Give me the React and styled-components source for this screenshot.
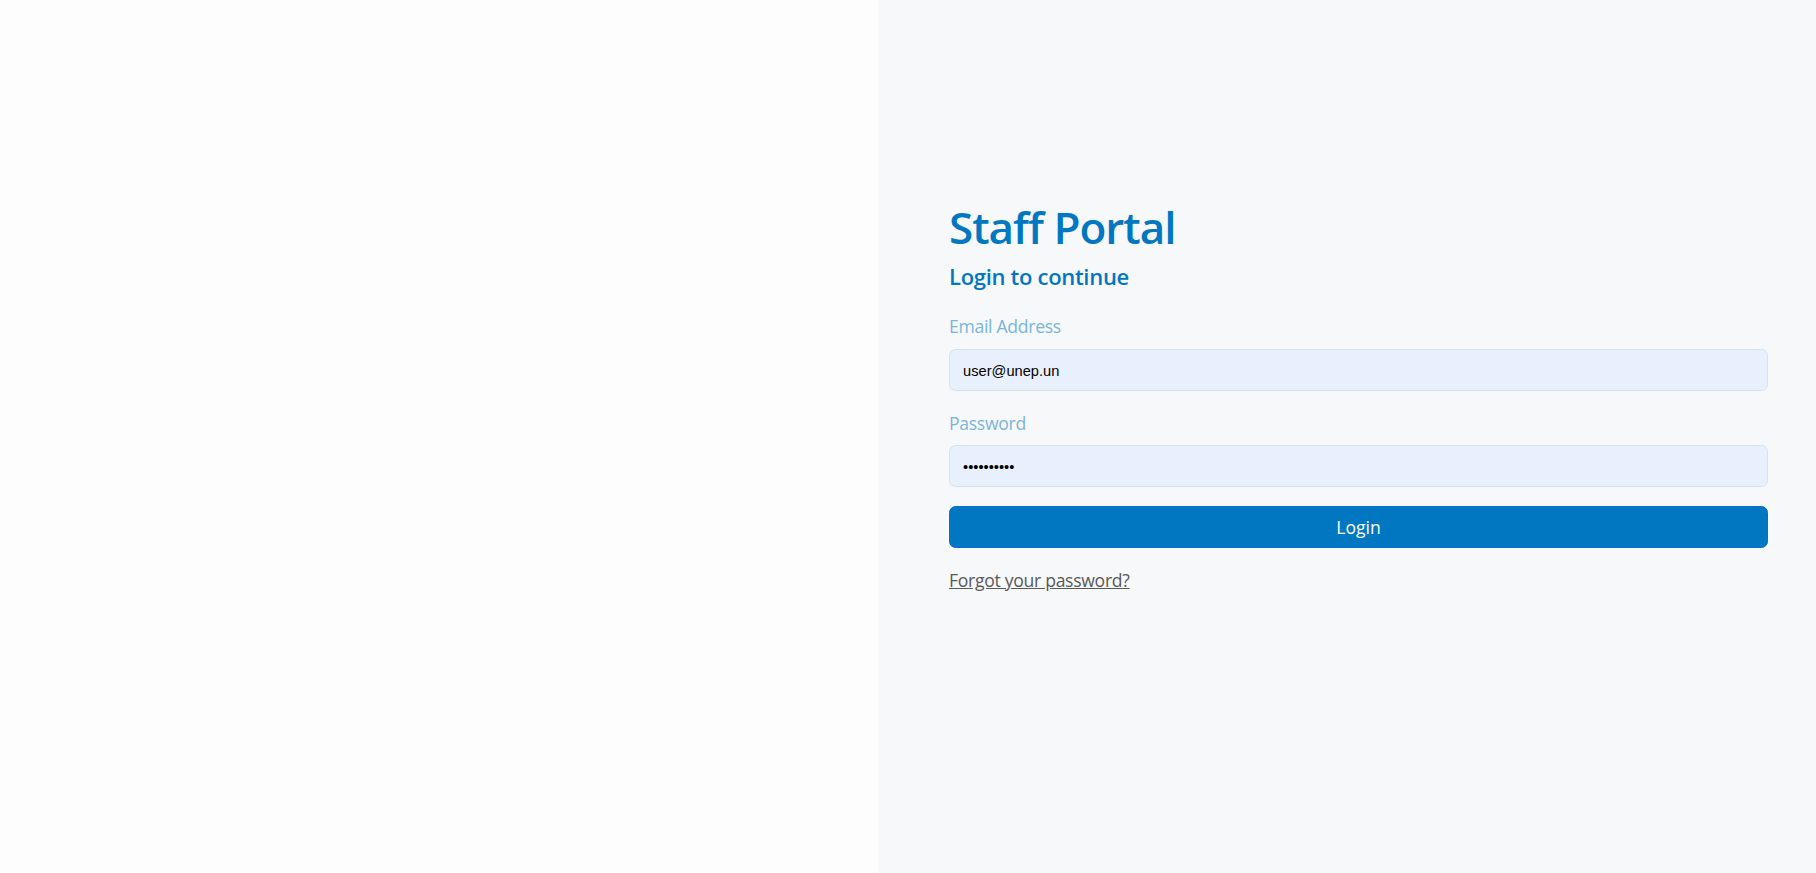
import React from "react";
import styled, { createGlobalStyle } from "styled-components";

const Global = createGlobalStyle`
  html, body { margin: 0; padding: 0; }
  body { font-family: "Open Sans", "Noto Sans", sans-serif; }
  * { box-sizing: border-box; }
`;

const Page = styled.div`
  display: grid;
  grid-template-columns: 878px 1fr;
  min-height: 873px;
`;

const Blank = styled.div`
  background: #fdfdfd;
`;

const Side = styled.div`
  background: #f7f8fa;
  padding: 201px 48px 0 71px;
`;

const Title = styled.h1`
  margin: 0 0 9px;
  font-size: 44px;
  line-height: 1.2;
  font-weight: 600;
  letter-spacing: -1px;
  color: #0077c0;
`;

const Subtitle = styled.h5`
  margin: 0 0 24px;
  font-size: 22px;
  line-height: 1.2;
  font-weight: 600;
  letter-spacing: -0.3px;
  color: #0077c0;
`;

const Form = styled.form`
  display: flex;
  flex-direction: column;
`;

const Field = styled.div`
  display: flex;
  flex-direction: column;
  margin-bottom: 19px;
`;

const Label = styled.label`
  font-size: 17.6px;
  line-height: 1.5;
  letter-spacing: -0.3px;
  color: #7ab5dc;
  margin-bottom: 9px;
`;

const Input = styled.input`
  height: 42px;
  padding: 2px 13px 0;
  border: 1px solid #dbe0e8;
  border-radius: 6.6px;
  background: #e8f0fe;
  font-family: "Liberation Sans", Arial, sans-serif;
  font-size: 14.67px;
  color: #000;
  outline: none;
`;

const Button = styled.button`
  height: 42px;
  border: 1px solid #0b6cd8;
  border-radius: 6.6px;
  background: #0077c0;
  color: #fff;
  font-family: inherit;
  font-size: 17.6px;
  cursor: pointer;
`;

const Forgot = styled.a`
  margin-top: 19px;
  font-size: 17.6px;
  line-height: 1.5;
  letter-spacing: -0.3px;
  color: #595959;
  text-decoration: underline;
  align-self: flex-start;
`;

export default function App() {
  return (
    <>
      <Global />
      <Page>
        <Blank />
        <Side>
          <Title>Staff Portal</Title>
          <Subtitle>Login to continue</Subtitle>
          <Form onSubmit={(e) => e.preventDefault()}>
            <Field>
              <Label htmlFor="email">Email Address</Label>
              <Input id="email" type="email" defaultValue="user@unep.un" readOnly />
            </Field>
            <Field>
              <Label htmlFor="password">Password</Label>
              <Input id="password" type="password" defaultValue="password12" readOnly />
            </Field>
            <Button type="submit">Login</Button>
            <Forgot href="#">Forgot your password?</Forgot>
          </Form>
        </Side>
      </Page>
    </>
  );
}
